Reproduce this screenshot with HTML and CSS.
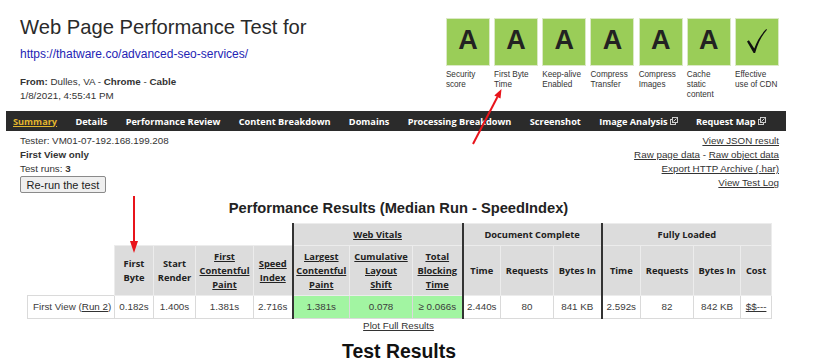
FILE: index.html
```html
<!DOCTYPE html>
<html lang="en">
<head>
    <meta charset="UTF-8">
    <meta name="viewport" content="width=device-width, initial-scale=1.0">
    <title>WebPageTest - Test Result</title>
    <link rel="stylesheet" href="styles.css">
</head>
<body>
    <div class="page">
        <!-- Header: judul tes dan nilai -->
        <div class="header">
            <div class="test-info">
                <h1>Web Page Performance Test for</h1>
                <a class="test-url" href="#">https://thatware.co/advanced-seo-services/</a>
                <p class="test-from"><b>From:</b> Dulles, VA - <b>Chrome</b> - <b>Cable</b><br>1/8/2021, 4:55:41 PM</p>
            </div>
            <ul class="grades">
                <li><div class="grade">A</div><span>Security<br>score</span></li>
                <li><div class="grade">A</div><span>First Byte<br>Time</span></li>
                <li><div class="grade">A</div><span>Keep-alive<br>Enabled</span></li>
                <li><div class="grade">A</div><span>Compress<br>Transfer</span></li>
                <li><div class="grade">A</div><span>Compress<br>Images</span></li>
                <li><div class="grade">A</div><span>Cache<br>static<br>content</span></li>
                <li>
                    <div class="grade">
                        <svg width="20" height="24" viewBox="0 0 20 24"><path d="M0 12.6 L1.9 11.2 L7.3 19.6 C9.8 12.4 14 5.2 19.3 0 L20 0.8 C15 6.2 11 13.8 8.1 24 L6.6 24 Z" fill="#111"/></svg>
                    </div>
                    <span>Effective<br>use of CDN</span>
                </li>
            </ul>
        </div>

        <!-- Menu tab -->
        <nav class="tabs">
            <a class="active" href="#">Summary</a>
            <a href="#">Details</a>
            <a href="#">Performance Review</a>
            <a href="#">Content Breakdown</a>
            <a href="#">Domains</a>
            <a href="#">Processing Breakdown</a>
            <a href="#">Screenshot</a>
            <a href="#">Image Analysis<svg class="ext" width="8" height="8" viewBox="0 0 8 8"><rect x="0.5" y="2.5" width="5" height="5" fill="none" stroke="#ccc"/><rect x="2.5" y="0.5" width="5" height="5" fill="#2b2b2b" stroke="#ccc"/><path d="M3.5 4.5 L6.5 1.5" stroke="#ccc"/></svg></a>
            <a href="#">Request Map<svg class="ext" width="8" height="8" viewBox="0 0 8 8"><rect x="0.5" y="2.5" width="5" height="5" fill="none" stroke="#ccc"/><rect x="2.5" y="0.5" width="5" height="5" fill="#2b2b2b" stroke="#ccc"/><path d="M3.5 4.5 L6.5 1.5" stroke="#ccc"/></svg></a>
        </nav>

        <div class="run-info">
            <div class="run-left">
                <div>Tester: VM01-07-192.168.199.208</div>
                <div><b>First View only</b></div>
                <div>Test runs: <b>3</b></div>
                <button type="button">Re-run the test</button>
            </div>
            <div class="run-links">
                <a href="#">View JSON result</a><br>
                <a href="#">Raw page data</a> - <a href="#">Raw object data</a><br>
                <a href="#">Export HTTP Archive (.har)</a><br>
                <a href="#">View Test Log</a>
            </div>
        </div>

        <h2 class="perf-title">Performance Results (Median Run - SpeedIndex)</h2>

        <!-- Tabel hasil -->
        <table class="results">
            <colgroup>
                <col class="w87"><col class="w39"><col class="w42"><col class="w58"><col class="w39">
                <col class="w57"><col class="w63"><col class="w50">
                <col class="w38"><col class="w53"><col class="w48">
                <col class="w39"><col class="w53"><col class="w47"><col class="w31">
            </colgroup>
            <tr>
                <th class="blank" colspan="5"></th>
                <th class="sep" colspan="3"><a href="#">Web Vitals</a></th>
                <th class="sep" colspan="3">Document Complete</th>
                <th class="sep" colspan="4">Fully Loaded</th>
            </tr>
            <tr>
                <th class="blank"></th>
                <th>First<br>Byte</th>
                <th>Start<br>Render</th>
                <th><a href="#">First<br>Contentful<br>Paint</a></th>
                <th><a href="#">Speed<br>Index</a></th>
                <th class="sep"><a href="#">Largest<br>Contentful<br>Paint</a></th>
                <th><a href="#">Cumulative<br>Layout<br>Shift</a></th>
                <th><a href="#">Total<br>Blocking<br>Time</a></th>
                <th class="sep">Time</th>
                <th>Requests</th>
                <th>Bytes In</th>
                <th class="sep">Time</th>
                <th>Requests</th>
                <th>Bytes In</th>
                <th>Cost</th>
            </tr>
            <tr>
                <td class="label">First View (<a href="#">Run 2</a>)</td>
                <td>0.182s</td>
                <td>1.400s</td>
                <td>1.381s</td>
                <td>2.716s</td>
                <td class="sep good">1.381s</td>
                <td class="good">0.078</td>
                <td class="good">&ge; 0.066s</td>
                <td class="sep">2.440s</td>
                <td>80</td>
                <td>841 KB</td>
                <td class="sep">2.592s</td>
                <td>82</td>
                <td>842 KB</td>
                <td><a href="#">$$---</a></td>
            </tr>
        </table>
        <p class="plot"><a href="#">Plot Full Results</a></p>

        <h2 class="section-title">Test Results</h2>
    </div>

    <!-- Panah anotasi -->
    <svg class="marks" width="834" height="363" viewBox="0 0 834 363">
        <line x1="473" y1="144" x2="497.4" y2="97" stroke="#e8141b" stroke-width="2"/>
        <polygon points="501.5,89 500.5,98.6 494.3,95.4" fill="#e8141b"/>
        <line x1="134" y1="196" x2="134" y2="243" stroke="#e8141b" stroke-width="2"/>
        <polygon points="130,241 138,241 134,253" fill="#e8141b"/>
    </svg>
</body>
</html>
```

FILE: styles.css
```css
/* Dasar halaman */
body {
    margin: 0;
    font-family: "Liberation Sans", Arial, sans-serif;
    font-size: 9.8px;
    color: #333;
    background: #fff;
}

.page {
    width: 780px;
    margin-left: 6px;
}

/* Header */
.header {
    display: flex;
    justify-content: space-between;
    padding: 0 7px 0 14px;
}

.test-info {
    padding-top: 15px;
}

h1 {
    margin: 0;
    font-size: 20.2px;
    font-weight: normal;
    line-height: 24px;
    color: #2a2a2a;
}

.test-url {
    display: block;
    margin-top: 8px;
    font-size: 12px;
    line-height: 14px;
    color: #2424b4;
    text-decoration: none;
}

.test-from {
    margin: 13.5px 0 0;
    padding-bottom: 8.5px;
    line-height: 14px;
}

/* Kotak nilai */
.grades {
    list-style: none;
    margin: 0;
    padding: 18px 0 0;
    display: flex;
    gap: 4.2px;
}

.grades li {
    width: 44px;
}

.grade {
    height: 48px;
    box-sizing: border-box;
    border: 1px solid #dbe9c6;
    background: #9acd58;
    display: flex;
    align-items: center;
    justify-content: center;
    padding-bottom: 3px;
    font-weight: bold;
    font-size: 27px;
    color: #222;
}

.grades span {
    display: block;
    margin-top: 3.7px;
    font-size: 8.2px;
    line-height: 10px;
    color: #333;
    white-space: nowrap;
}

/* Menu tab */
.tabs {
    display: flex;
    align-items: center;
    gap: 18.3px;
    height: 20px;
    padding-left: 7px;
    background: #2b2b2b;
    font-family: "Open Sans", sans-serif;
    font-weight: bold;
    font-size: 9.2px;
}

.tabs a {
    color: #fff;
    text-decoration: none;
    white-space: nowrap;
}

.tabs a.active {
    color: #e3b62e;
    text-decoration: underline;
}

.ext {
    margin-left: 2px;
    vertical-align: 0;
}

/* Info pengujian */
.run-info {
    display: flex;
    justify-content: space-between;
    padding: 3px 7px 0 14px;
    line-height: 14px;
}

.run-links {
    text-align: right;
}

.run-links a {
    color: #333;
}

.run-left button {
    display: block;
    height: 17px;
    padding: 0 5.5px;
    border: 1px solid #8a8a8a;
    border-radius: 2px;
    background: #efefef;
    font-family: "Liberation Sans", Arial, sans-serif;
    font-size: 11px;
    color: #222;
}

.perf-title {
    margin: 6px 0 5.5px;
    padding-left: 5px;
    font-size: 14.7px;
    line-height: 18px;
    text-align: center;
    color: #222;
}

/* Tabel hasil */
.results {
    border-collapse: collapse;
    table-layout: fixed;
    width: 744px;
    margin: 0 0 0 21px;
}

.w87 { width: 87px; }
.w63 { width: 63px; }
.w58 { width: 58px; }
.w57 { width: 57px; }
.w53 { width: 53px; }
.w50 { width: 50px; }
.w48 { width: 48px; }
.w47 { width: 47px; }
.w42 { width: 42px; }
.w39 { width: 39px; }
.w38 { width: 38px; }
.w31 { width: 31px; }

.results th {
    background: #dcdcdc;
    border: 1px solid #ececec;
    padding: 4px 1px;
    font-family: "Open Sans", sans-serif;
    font-weight: bold;
    font-size: 9.3px;
    line-height: 13.7px;
    color: #222;
}

.results th a {
    color: #222;
}

.results th.blank {
    background: none;
    border: none;
}

.results td {
    border: 1px solid #dadada;
    padding: 4px 1px;
    line-height: 14px;
    text-align: center;
    color: #3c3c3c;
    white-space: nowrap;
}

.results td a {
    color: #333;
}

.results td.label {
    text-align: left;
    padding-left: 5px;
}

.results .good {
    background: #a2f5a2;
}

.results .sep {
    border-left: 2px solid #333;
}

.plot {
    margin: 0;
    padding-left: 5px;
    line-height: 14px;
    text-align: center;
}

.plot a {
    color: #333;
}

.section-title {
    margin: 6.7px 0 0;
    padding-left: 6px;
    font-size: 19.4px;
    line-height: 22px;
    text-align: center;
    color: #111;
}

/* Panah anotasi di atas konten */
.marks {
    position: absolute;
    left: 0;
    top: 0;
    pointer-events: none;
}
```
